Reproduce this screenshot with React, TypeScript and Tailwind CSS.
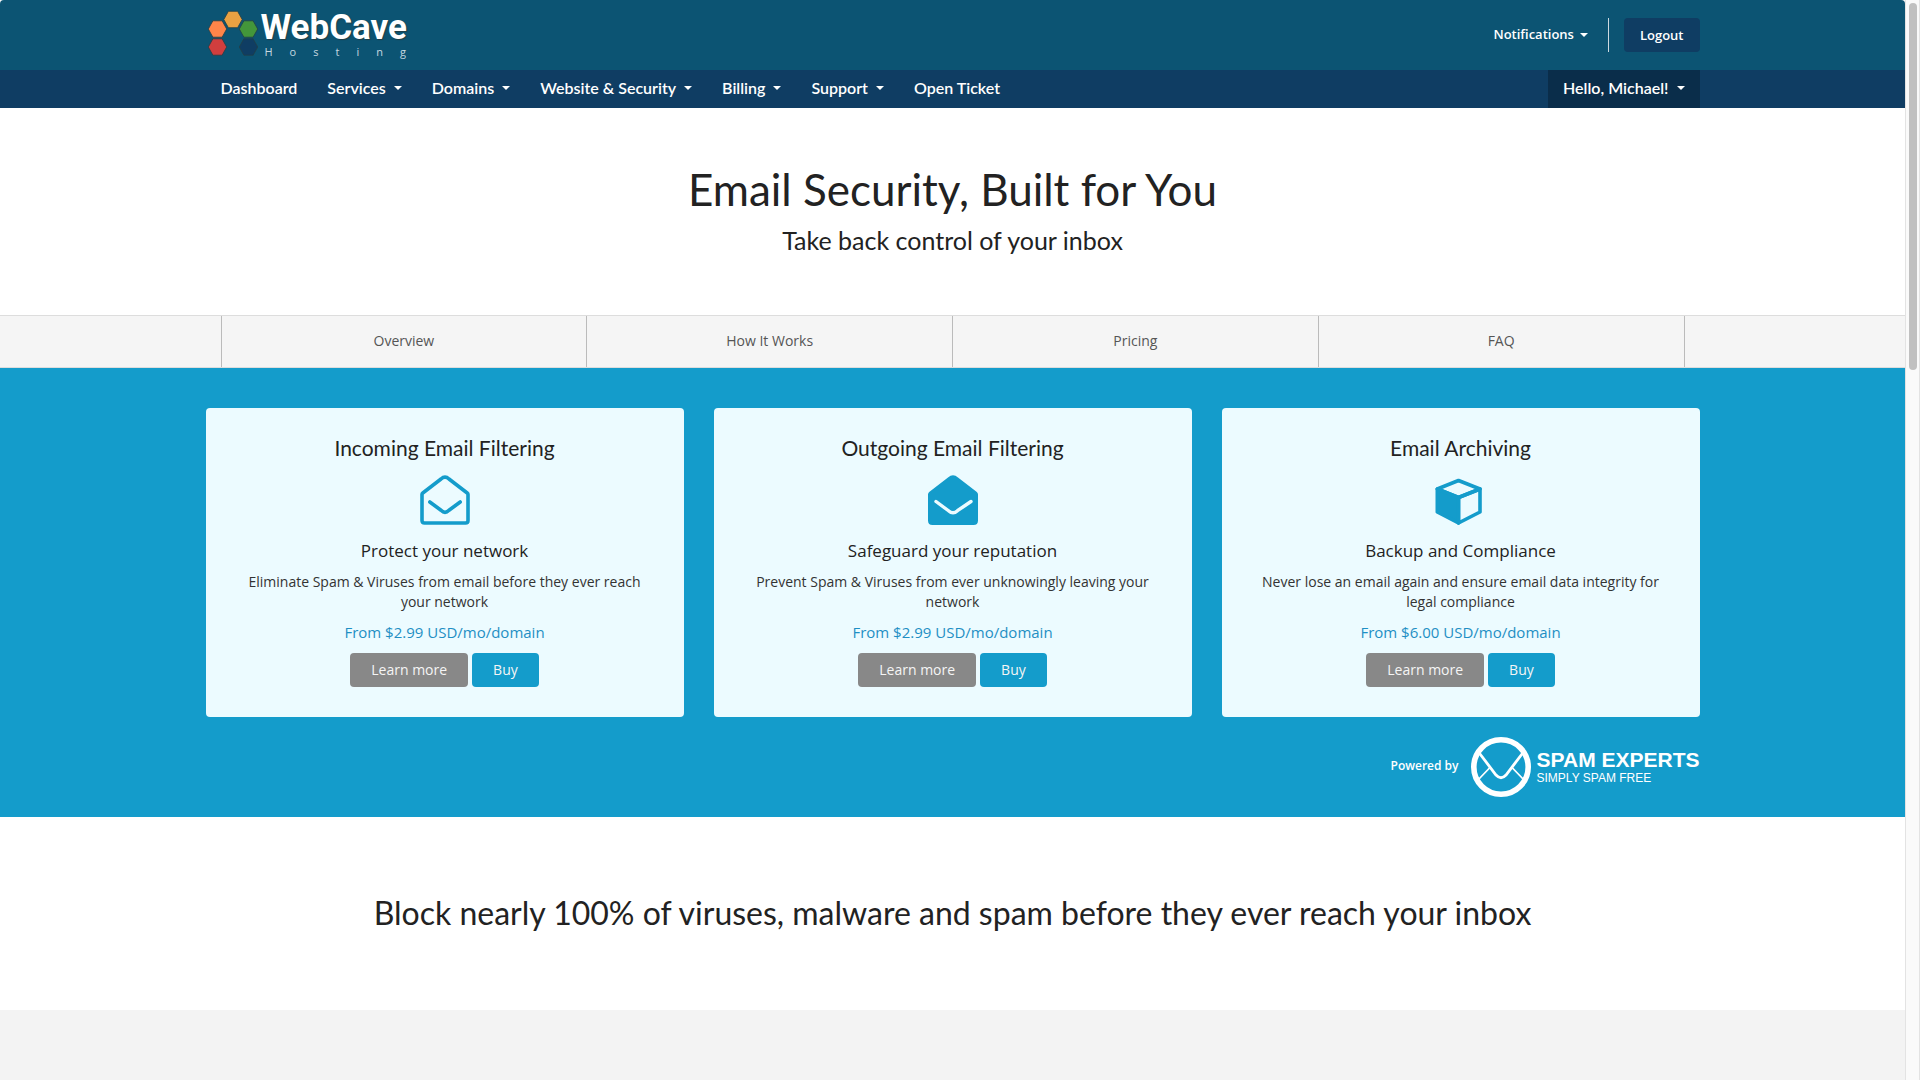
import React from "react";

const heading = "font-[Lato,sans-serif]";

function Caret() {
  return (
    <span
      aria-hidden="true"
      className="inline-block border-x-4 border-t-4 border-x-transparent border-t-current"
    />
  );
}

const hexagons = [
  { x: 44, y: 19.5, fill: "#e9a142" },
  { x: 28.5, y: 29, fill: "#ff8549" },
  { x: 59.5, y: 29, fill: "#43963a" },
  { x: 28.5, y: 47, fill: "#d13e3e" },
  { x: 59.5, y: 47, fill: "#0f3d63" },
];

function HexMark() {
  return (
    <svg viewBox="18 10 52 47" className="h-[47px] w-[52px]" aria-hidden="true">
      {hexagons.map(({ x, y, fill }) => (
        <polygon
          key={fill}
          points={`${x - 9.2},${y} ${x - 4.6},${y - 8.2} ${x + 4.6},${y - 8.2} ${x + 9.2},${y} ${x + 4.6},${y + 8.2} ${x - 4.6},${y + 8.2}`}
          fill={fill}
          stroke="#233f45"
          strokeWidth="0.8"
        />
      ))}
    </svg>
  );
}

function Logo() {
  return (
    <a href="#home" className="flex items-start gap-0.5 pl-px pt-2.5 text-white">
      <HexMark />
      <span className="flex flex-col">
        <span className="font-[Roboto,sans-serif] text-[35px] font-bold leading-9 [text-shadow:1px_1px_1px_#233f45]">
          WebCave
        </span>
        <span className="pl-1 text-[11px] leading-3 tracking-[17px] text-[#c5d8e0]">
          Hosting
        </span>
      </span>
    </a>
  );
}

function EnvelopeOutline() {
  return (
    <svg viewBox="0 0 50 50" className="size-[50px]" fill="none" stroke="currentColor" strokeWidth="3.6" strokeLinecap="round" strokeLinejoin="round" aria-hidden="true">
      <path d="M2 19.5 Q2 18.6 2.8 18 L21 4 Q25 .2 29 4 L47.2 18 Q48 18.6 48 19.5 V45.5 Q48 48 45.5 48 H4.5 Q2 48 2 45.5 Z" />
      <path d="M9.8 27 L21 35.3 Q25 39.3 29 35.3 L40.2 27" />
    </svg>
  );
}

function EnvelopeSolid() {
  return (
    <svg viewBox="0 0 50 50" className="size-[50px]" aria-hidden="true">
      <path fill="currentColor" d="M0 19.5 Q0 17.8 1.5 16.7 L20 2.6 Q25 -2.2 30 2.6 L48.5 16.7 Q50 17.8 50 19.5 V45.5 Q50 50 45.5 50 H4.5 Q0 50 0 45.5 Z" />
      <path d="M8 26.5 L20.5 35.7 Q25 39.7 29.5 35.7 L43 26.5" fill="none" stroke="#ecfbff" strokeWidth="3.4" strokeLinecap="round" />
    </svg>
  );
}

function Cube() {
  return (
    <svg viewBox="0 0 52 50" className="h-[50px] w-[52px]" aria-hidden="true">
      <g stroke="currentColor" strokeWidth="3.6" strokeLinejoin="round">
        <path d="M2.3 14 L23.5 5.5 L45 14 L23.5 22.5 Z" fill="none" />
        <path d="M45 14 V37 L23.5 48 V22.5 Z" fill="none" />
        <path d="M2.3 14 V37 L23.5 48 V22.5 Z" fill="currentColor" />
      </g>
    </svg>
  );
}

function SpamExpertsMark() {
  return (
    <svg viewBox="0 0 60 60" className="size-[60px]" fill="none" stroke="white" aria-hidden="true">
      <circle cx="30" cy="30" r="27.2" strokeWidth="5.6" />
      <path d="M7.5 15 L25 38 Q30 43.5 35 38 L52.5 15" strokeWidth="2.8" />
      <path d="M6.5 43.5 L18.5 31 M53.5 43.5 L41.5 31" strokeWidth="1.8" />
    </svg>
  );
}

const menu = [
  { label: "Dashboard", more: false },
  { label: "Services", more: true },
  { label: "Domains", more: true },
  { label: "Website & Security", more: true },
  { label: "Billing", more: true },
  { label: "Support", more: true },
  { label: "Open Ticket", more: false },
];

const sections = ["Overview", "How It Works", "Pricing", "FAQ"];

const products = [
  {
    title: "Incoming Email Filtering",
    icon: <EnvelopeOutline />,
    subtitle: "Protect your network",
    text: "Eliminate Spam & Viruses from email before they ever reach your network",
    price: "From $2.99 USD/mo/domain",
  },
  {
    title: "Outgoing Email Filtering",
    icon: <EnvelopeSolid />,
    subtitle: "Safeguard your reputation",
    text: "Prevent Spam & Viruses from ever unknowingly leaving your network",
    price: "From $2.99 USD/mo/domain",
  },
  {
    title: "Email Archiving",
    icon: <Cube />,
    subtitle: "Backup and Compliance",
    text: "Never lose an email again and ensure email data integrity for legal compliance",
    price: "From $6.00 USD/mo/domain",
  },
];

const container = "mx-auto w-full max-w-[1494px]";
const menuItem = "flex items-center gap-2 px-[15px] pb-0.5 text-base font-semibold";

export default function App() {
  return (
    <div className="flex min-h-screen bg-[#fafafa] font-['Open_Sans',sans-serif] text-[#222]">
      <div className="flex min-w-0 flex-1 flex-col">
        <header className="rounded-t bg-[#0c5473] text-white">
          <div className={`${container} flex h-[70px] items-start justify-between`}>
            <Logo />
            <div className="flex items-center pt-[18px] text-[13px] font-semibold">
              <button type="button" className="flex items-center gap-1.5 pr-5">
                Notifications <Caret />
              </button>
              <div className="border-l border-[#ccd9e0] pl-[15px]">
                <button type="button" className="rounded bg-[#0f3d63] px-4 py-[7px] leading-5">
                  Logout
                </button>
              </div>
            </div>
          </div>
        </header>

        <nav className="bg-[#0f3d63] text-white" aria-label="Main">
          <div className={`${container} flex h-[38px] justify-between`}>
            <div className="flex">
              {menu.map(({ label, more }) => (
                <a key={label} href="#menu" className={`${heading} ${menuItem}`}>
                  {label}
                  {more && <Caret />}
                </a>
              ))}
            </div>
            <button type="button" className={`${heading} ${menuItem} bg-[#0a2d4a]`}>
              Hello, Michael! <Caret />
            </button>
          </div>
        </nav>

        <div className="bg-white pb-[57px] pt-[55px] text-center">
          <h1 className={`${heading} text-[44px] leading-[52px]`}>Email Security, Built for You</h1>
          <h2 className={`${heading} mt-2 pb-px text-[25px] leading-[34px]`}>Take back control of your inbox</h2>
        </div>

        <nav className="border-y border-[#ddd] bg-[#f5f5f5]" aria-label="Product">
          <ul className="mx-auto grid w-full max-w-[1464px] grid-cols-4 border-l border-[#bbb]">
            {sections.map((name) => (
              <li key={name} className="border-r border-[#bbb]">
                <a href="#section" className="block pb-4 pt-3.5 text-center text-sm leading-[21px] text-[#555]">
                  {name}
                </a>
              </li>
            ))}
          </ul>
        </nav>

        <section className="bg-[#149ccb] pb-5 pt-10">
          <div className={`${container} grid grid-cols-3 gap-[30px]`}>
            {products.map((p) => (
              <article key={p.title} className="flex flex-col items-center rounded bg-[#ecfbff] px-10 pb-[30px] pt-7 text-center">
                <h3 className={`${heading} text-[21px] leading-6`}>{p.title}</h3>
                <div className="mt-[15px] text-[#149ccb]">{p.icon}</div>
                <h4 className="mt-3.5 text-[17px] leading-6">{p.subtitle}</h4>
                <p className="mt-[9px] text-sm leading-5 text-[#333]">{p.text}</p>
                <p className="mt-2 text-[15px] leading-6 text-[#1f8fc4]">{p.price}</p>
                <div className="mt-[9px] flex gap-1 text-sm leading-5 text-[#f5f5f5]">
                  <button type="button" className="rounded bg-[#888] px-[21px] py-[7px]">Learn more</button>
                  <button type="button" className="rounded bg-[#149ccb] px-[21px] py-[7px]">Buy</button>
                </div>
              </article>
            ))}
          </div>
          <div className={`${container} mt-5 flex items-center justify-end text-white`}>
            <span className="mr-3 pb-0.5 text-xs font-semibold">Powered by</span>
            <SpamExpertsMark />
            <span className="ml-1.5 flex flex-col pb-0.5 font-['Liberation_Sans',sans-serif]">
              <span className="text-[21px] font-bold leading-6">SPAM EXPERTS</span>
              <span className="text-xs leading-3">SIMPLY SPAM FREE</span>
            </span>
          </div>
        </section>

        <section className="bg-white pb-[79px] pt-[78px] text-center">
          <h2 className={`${heading} text-[32px] leading-9`}>
            Block nearly 100% of viruses, malware and spam before they ever reach your inbox
          </h2>
        </section>
        <div className="flex-1 bg-[#f3f3f3]" />
      </div>

      <div className="w-[15px] border-x border-[#e3e3e3] px-[3px] pt-[3px]" aria-hidden="true">
        <div className="h-[367px] w-2 rounded-full bg-[#c0c0c0]" />
      </div>
    </div>
  );
}
